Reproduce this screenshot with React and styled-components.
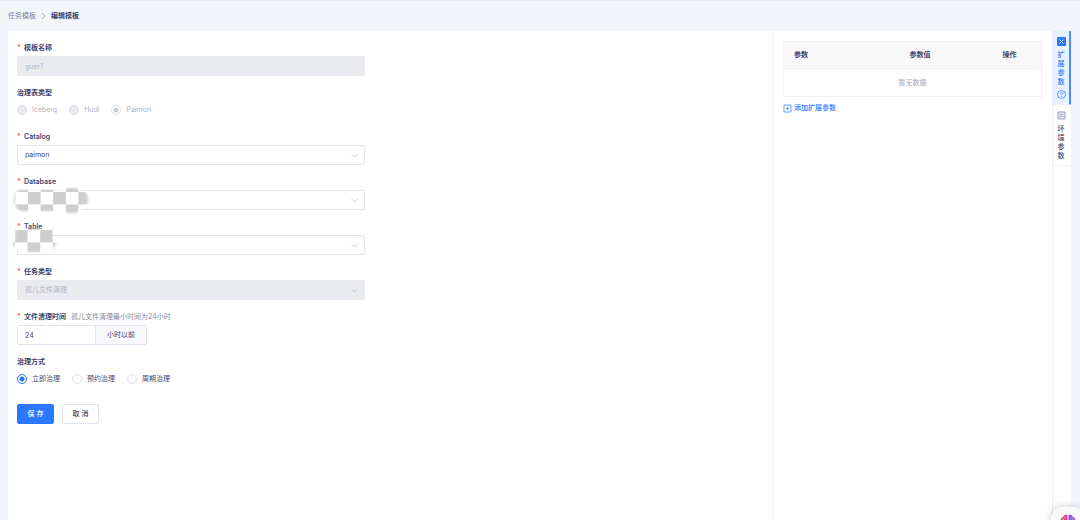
import { useState } from "react";
import styled, { createGlobalStyle } from "styled-components";

const GlobalStyle = createGlobalStyle`
  * {
    box-sizing: border-box;
  }

  body {
    margin: 0;
    color: #3f446b;
    background-color: #f2f6fa;
    font-family: Inter, "Noto Sans CJK SC", sans-serif;
    font-size: 7px;
    line-height: 10px;
  }

  input, select, button {
    margin: 0;
    font: inherit;
    color: inherit;
  }
`;

const Page = styled.div`
  display: flex;
  flex-direction: column;
  height: 100vh;
  overflow: hidden;
  border-top: 1px solid #e9eef3;
`;

const Breadcrumb = styled.nav`
  display: flex;
  align-items: center;
  gap: 5px;
  flex: none;
  height: 30px;
  padding: 0 8px;

  a {
    color: #7c809c;
    text-decoration: none;
  }

  span {
    font-weight: 600;
  }
`;

const Main = styled.main`
  display: flex;
  flex: 1;
  margin: 0 9px 0 8px;
  background-color: white;
  border-radius: 3px 3px 0 0;
`;

const Form = styled.form`
  flex: 1;
  padding: 7px 9px;
`;

const Field = styled.div`
  position: relative;
  max-width: 348px;
  margin-bottom: ${({ $compact }) => ($compact ? 8 : 7)}px;
`;

const Label = styled.label`
  display: flex;
  align-items: center;
  height: 18px;
  padding-top: 2px;
  font-weight: 600;

  &::before {
    content: "${({ $required }) => ($required ? "*" : "")}";
    width: ${({ $required }) => ($required ? 7 : 0)}px;
    color: #f5594e;
  }

  small {
    margin-left: 5px;
    color: #858aa3;
    font-size: 7px;
    font-weight: 400;
  }
`;

const Control = styled.input`
  display: block;
  width: 100%;
  height: 20px;
  padding: 0 7px;
  background-color: white;
  border: 1px solid #e0e4ee;
  border-radius: 2px;
  outline: none;
  appearance: none;
  opacity: 1;

  &:disabled {
    color: #b0b3c4;
    background-color: #eaebef;
    border-color: #e8e9ee;
    opacity: 1;
  }
`;

const SelectBox = styled.div`
  display: grid;
  align-items: center;

  > * {
    grid-area: 1 / 1;
  }

  svg {
    justify-self: end;
    margin-right: 7px;
    pointer-events: none;
  }
`;

const Mask = styled.svg`
  position: absolute;
  left: -6px;
  top: ${({ $top }) => $top}px;
  pointer-events: none;
`;

const InputGroup = styled.div`
  display: flex;
  width: 130px;

  input {
    flex: 1;
    min-width: 0;
    border-radius: 2px 0 0 2px;
  }

  span {
    display: flex;
    align-items: center;
    padding: 0 11px;
    background-color: #f8f8fa;
    border: 1px solid #e0e4ee;
    border-left: 0;
    border-radius: 0 2px 2px 0;
  }
`;

const RadioGroup = styled.div`
  display: flex;
  align-items: center;
  gap: 12px;
  height: 18px;
`;

const Radio = styled.label`
  display: flex;
  align-items: center;
  gap: 5px;
  color: ${({ $disabled }) => ($disabled ? "#b0b3c4" : "inherit")};

  input {
    width: 10px;
    height: 10px;
    background: white;
    border: 1px solid #dcdee7;
    border-radius: 50%;
    appearance: none;
  }

  input:disabled {
    background: #eaebef;
  }

  input:checked {
    background: radial-gradient(circle, #2b78ff 2px, white 3px);
    border-color: #2b78ff;
  }

  input:checked:disabled {
    background: radial-gradient(circle, #c6c8d2 2px, white 3px);
    border-color: #dcdee7;
  }
`;

const Actions = styled.div`
  display: flex;
  gap: 8px;
  margin-top: 16px;
`;

const Button = styled.button`
  width: 37px;
  height: 20px;
  padding: 0;
  color: ${({ $primary }) => ($primary ? "white" : "inherit")};
  background-color: ${({ $primary }) => ($primary ? "#2b78ff" : "white")};
  border: 1px solid ${({ $primary }) => ($primary ? "#2b78ff" : "#e0e4ee")};
  border-radius: 2px;
  font-weight: 500;
  cursor: pointer;
`;

const Aside = styled.aside`
  width: 280px;
  padding: 10px;
  border-left: 1px solid #eff0f4;
`;

const Table = styled.table`
  width: 100%;
  border: 1px solid #efeff2;
  border-collapse: collapse;
  table-layout: fixed;

  th {
    height: 27px;
    padding: 0 10px;
    background-color: #f8f8f9;
    border-bottom: 1px solid #efeff2;
    font-weight: 600;
    text-align: left;
  }

  td {
    height: 28px;
    padding: 0;
    color: #a3a6b8;
    text-align: center;
  }
`;

const AddButton = styled.button`
  display: flex;
  align-items: center;
  gap: 2px;
  margin-top: 6px;
  padding: 0;
  color: #2b78ff;
  background: none;
  border: 0;
  font-weight: 500;
  cursor: pointer;
`;

const Tabs = styled.div`
  display: flex;
  flex-direction: column;
  width: 19px;
  border-left: 1px solid #eff0f4;
`;

const Tab = styled.button`
  display: flex;
  flex-direction: column;
  align-items: center;
  gap: 4px;
  padding: 6px 0 5px;
  color: ${({ $active }) => ($active ? "#2b78ff" : "inherit")};
  background-color: ${({ $active }) => ($active ? "#e8f1ff" : "white")};
  border: 0;
  border-right: 2px solid ${({ $active }) => ($active ? "#4a8cff" : "white")};
  border-bottom: 1px solid #eff0f4;
  font-weight: 500;
  cursor: pointer;

  span {
    width: 8px;
    line-height: 9px;
    word-break: break-all;
  }
`;

const Assistant = styled.button`
  position: fixed;
  right: -5px;
  bottom: -17px;
  width: 34px;
  height: 30px;
  padding: 0;
  background-color: #fafafb;
  border: 1px solid white;
  border-radius: 12px;
  box-shadow: 0 0 8px rgba(0, 0, 0, 0.2);
`;

function Chevron() {
  return (
    <svg width="7" height="5" viewBox="0 0 7 5" fill="none" stroke="#bfc2d0">
      <path d="M.5 1 3.5 4l3-3" strokeWidth=".8" />
    </svg>
  );
}

function Select({ id, value, disabled }) {
  return (
    <SelectBox>
      <Control as="select" id={id} defaultValue={value} disabled={disabled}>
        <option value={value}>{value}</option>
      </Control>
      <Chevron />
    </SelectBox>
  );
}

// soft-edged checkerboard over a hidden value, (x, y) is the corner of a gray cell
function Mosaic({ id, top, width, height, x, y, shape }) {
  return (
    <Mask $top={top} width={width} height={height} aria-hidden="true">
      <defs>
        <filter id={`${id}-blur`}>
          <feGaussianBlur stdDeviation="1" />
        </filter>
        <pattern id={`${id}-cells`} x={x} y={y} width="25.2" height="24.8" patternUnits="userSpaceOnUse">
          <path d="M0 0h25.200v24.800H0z" fill="white" />
          <path d="M0 0h12.600v12.400H0zM12.600 12.400h12.600v12.400H12.600z" fill="#cecece" />
        </pattern>
        <mask id={`${id}-edge`}>
          <path d={shape} fill="white" filter={`url(#${id}-blur)`} />
        </mask>
      </defs>
      <rect width={width} height={height} fill={`url(#${id}-cells)`} mask={`url(#${id}-edge)`} />
    </Mask>
  );
}

function RadioField({ name, label, options, value, disabled, onChange }) {
  return (
    <Field $compact role="radiogroup" aria-labelledby={`${name}-label`}>
      <Label as="div" id={`${name}-label`}>{label}</Label>
      <RadioGroup>
        {options.map(option => (
          <Radio key={option} $disabled={disabled}>
            <input
              type="radio"
              name={name}
              checked={option === value}
              disabled={disabled}
              onChange={() => onChange?.(option)}
            />
            {option}
          </Radio>
        ))}
      </RadioGroup>
    </Field>
  );
}

export default function App() {
  const [mode, setMode] = useState("立即治理");
  const [tab, setTab] = useState("ext");

  return (
    <Page>
      <GlobalStyle />
      <Breadcrumb>
        <a href="#templates">任务模板</a>
        <svg width="5" height="8" viewBox="0 0 5 8" fill="none" stroke="#9a9eb3">
          <path d="M1 1l3 3-3 3" strokeWidth=".8" />
        </svg>
        <span>编辑模板</span>
      </Breadcrumb>
      <Main>
        <Form onSubmit={e => e.preventDefault()}>
          <Field>
            <Label $required htmlFor="name">模板名称</Label>
            <Control id="name" defaultValue="guer1" disabled />
          </Field>
          <RadioField name="format" label="治理表类型" options={["Iceberg", "Hudi", "Paimon"]} value="Paimon" disabled />
          <Field>
            <Label $required htmlFor="catalog">Catalog</Label>
            <Select id="catalog" value="paimon" />
          </Field>
          <Field>
            <Label $required htmlFor="database">Database</Label>
            <Select id="database" value="" />
            <Mosaic
              id="mask-db"
              top={15}
              width={82}
              height={28}
              x={17}
              y={5}
              shape="M10 3h44l2-2h10l2 2q9 0 9 10 0 9-9 10l-2 3H56l-2-2H12q-8 0-9-11 0-10 7-10z"
            />
          </Field>
          <Field>
            <Label $required htmlFor="table">Table</Label>
            <Select id="table" value="" />
            <Mosaic
              id="mask-table"
              top={11}
              width={48}
              height={25}
              x={4}
              y={2}
              shape="M4 1h38v12l4 1-4 7-11 3H15L5 21 1 14l3-1z"
            />
          </Field>
          <Field>
            <Label $required htmlFor="type">任务类型</Label>
            <Select id="type" value="孤儿文件清理" disabled />
          </Field>
          <Field>
            <Label $required htmlFor="hours">
              文件清理时间
              <small>孤儿文件清理最小时间为24小时</small>
            </Label>
            <InputGroup>
              <Control id="hours" defaultValue="24" />
              <span>小时以前</span>
            </InputGroup>
          </Field>
          <RadioField name="mode" label="治理方式" options={["立即治理", "预约治理", "周期治理"]} value={mode} onChange={setMode} />
          <Actions>
            <Button $primary type="submit">保 存</Button>
            <Button type="button">取 消</Button>
          </Actions>
        </Form>
        <Aside>
          <Table>
            <colgroup>
              <col width="45%" />
              <col width="36%" />
              <col width="19%" />
            </colgroup>
            <thead>
              <tr>
                <th>参数</th>
                <th>参数值</th>
                <th>操作</th>
              </tr>
            </thead>
            <tbody>
              <tr>
                <td colSpan="3">暂无数据</td>
              </tr>
            </tbody>
          </Table>
          <AddButton type="button">
            <svg width="9" height="9" viewBox="0 0 9 9" fill="none" stroke="#2b78ff" strokeWidth=".7">
              <path d="M1 1h7v7H1zM4.5 2.7v3.6M2.7 4.5h3.6" />
            </svg>
            添加扩展参数
          </AddButton>
        </Aside>
        <Tabs>
          <Tab type="button" $active={tab === "ext"} onClick={() => setTab("ext")}>
            <svg width="9" height="9" viewBox="0 0 9 9">
              <rect width="9" height="9" rx="1" fill="#2b78ff" />
              <path d="M2.5 2.5l4 4M6.5 2.5l-4 4" stroke="white" strokeWidth=".9" />
            </svg>
            <span>扩展参数</span>
            <svg width="9" height="9" viewBox="0 0 9 9" fill="none" stroke="#2b78ff" strokeWidth=".7">
              <circle cx="4.5" cy="4.5" r="4" />
              <path d="M3.3 3.7q0-1.3 1.2-1.3t1.2 1.1q0 .6-.6 1t-.6.8M4.5 6v.8" />
            </svg>
          </Tab>
          <Tab type="button" $active={tab === "env"} onClick={() => setTab("env")}>
            <svg width="9" height="9" viewBox="0 0 9 9" fill="none" stroke="#9fa2b4">
              <path d="M1 1h7v7H1z" fill="#e7e8ee" />
              <path d="M2.5 3.5h4M2.5 5.5h4" strokeWidth=".8" />
            </svg>
            <span>环境参数</span>
          </Tab>
        </Tabs>
      </Main>
      <Assistant type="button" aria-label="助手">
        <svg width="16" height="14" viewBox="0 0 16 14">
          <path d="M7.500 1v12Q1 13 1 7q-1-3 2-4 1-3 4.500-2z" fill="#d9478f" />
          <path d="M8.500 1v12q6.500 0 6.500-6 1-3-2-4-1-3-4.500-2z" fill="#8b5cf0" />
          <path d="M2 4.500l2 1.500M4 2.500l2 2M11 3.500l2 2" stroke="#ffad5c" />
        </svg>
      </Assistant>
    </Page>
  );
}
